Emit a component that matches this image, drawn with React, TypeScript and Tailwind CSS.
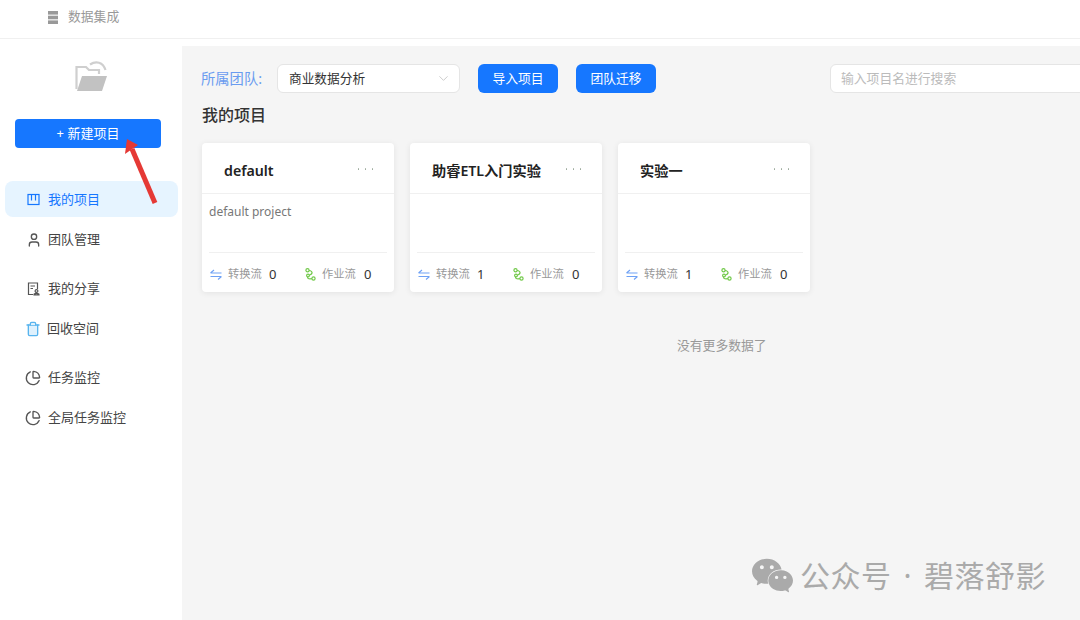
import { ChevronDown, PieChart, Trash2, User } from 'lucide-react';
import { SiWechat } from 'react-icons/si';

const FONT = 'font-["Noto_Sans","Noto_Sans_CJK_SC",sans-serif]';

function OpenFolderIcon() {
  return (
    <svg width="32" height="31" viewBox="0 0 32 31" fill="none">
      <path d="M1.5 29V7H11L14 10H24V14" stroke="#cfcfcf" strokeWidth="2.2" />
      <path d="M2 31L7 16H32L27 31Z" fill="#c2c2c2" />
      <path d="M15 4.5C21 0.5 28 2 30.5 10" stroke="#cfcfcf" strokeWidth="2.2" />
    </svg>
  );
}

function BoardIcon() {
  return (
    <svg width="13" height="13" viewBox="0 0 13 13" fill="none" stroke="#1677ff" strokeWidth="1.2">
      <rect x="1" y="1.5" width="11" height="10" />
      <path d="M4.5 1.5V7.5M8.5 1.5V7.5" />
    </svg>
  );
}

function ShareIcon() {
  return (
    <svg width="13" height="14" viewBox="0 0 13 14" fill="none" stroke="#555" strokeWidth="1.2">
      <path d="M6 12.5H1.5V1H10.5V7" />
      <path d="M3.5 4H8M3.5 6.5H6" />
      <circle cx="9.5" cy="9" r="1.4" />
      <path d="M7 12.8C7 11 12 11 12 12.8Z" />
    </svg>
  );
}

function SwapIcon() {
  return (
    <svg width="12" height="11" viewBox="0 0 12 11" fill="none" stroke="#6ea1f5" strokeWidth="1.1">
      <path d="M0.5 4H11.5M0.5 4L4 1" />
      <path d="M11.5 7.5H0.5M11.5 7.5L8 10.5" />
    </svg>
  );
}

function FlowIcon() {
  return (
    <svg width="11" height="13" viewBox="0 0 11 13" fill="none" stroke="#72c94a" strokeWidth="1.2">
      <circle cx="2.5" cy="2.2" r="1.6" />
      <circle cx="8.5" cy="10.5" r="1.6" />
      <circle cx="3" cy="7.5" r="1.4" />
      <path d="M4 2.5C8 3 8 6 4.4 7.2M2.5 9C2.5 11 4.5 11 6.9 10.7" />
    </svg>
  );
}

function NavItem({ icon, label, className = '', labelClass = '', active = false }: { icon: React.ReactNode; label: string; className?: string; labelClass?: string; active?: boolean }) {
  return (
    <div className={`flex h-9 items-center rounded-lg pt-[1px] pl-[22px] text-[13px] ${active ? 'bg-[#e6f4ff] text-[#1677ff]' : 'text-[#444]'} ${className}`}>
      <span className="flex w-[21px] shrink-0">{icon}</span>
      <span className={labelClass}>{label}</span>
    </div>
  );
}

function ProjectCard({ title, desc, transforms, jobs }: { title: string; desc?: string; transforms: number; jobs: number }) {
  return (
    <div className="flex h-[149px] w-[192px] flex-col rounded bg-white shadow-[0_1px_6px_rgba(0,0,0,0.08)]">
      <div className="flex h-[51px] shrink-0 items-center justify-between border-b border-[#f0f0f0] pt-[6px] pr-[21px] pl-[22px]">
        <span className="text-[14.2px] leading-none font-semibold text-[#222]">{title}</span>
        <span className="mb-[4px] flex gap-[5.5px]">
          <i className="size-[1.5px] rounded-full bg-[#9aa89a]" />
          <i className="size-[1.5px] rounded-full bg-[#9aa89a]" />
          <i className="size-[1.5px] rounded-full bg-[#9aa89a]" />
        </span>
      </div>
      <div className="mx-[7px] h-[59px] border-b border-[#f0f0f0] pt-[9px] text-[12px] leading-[17px] text-[#777]">{desc}</div>
      <div className="flex flex-1 items-center pt-[3px] pl-[8px] text-[11.3px] text-[#999]">
        <span className="flex w-[95px] items-center">
          <span className="mr-[6px] flex"><SwapIcon /></span>
          转换流
          <span className="ml-[7px] text-[13px] leading-none text-[#333]">{transforms}</span>
        </span>
        <span className="flex items-center">
          <span className="mr-[6px] flex"><FlowIcon /></span>
          作业流
          <span className="ml-[8px] text-[13px] leading-none text-[#333]">{jobs}</span>
        </span>
      </div>
    </div>
  );
}

export default function App() {
  return (
    <div className={`relative flex h-[620px] w-[1080px] flex-col overflow-hidden bg-white ${FONT}`}>
      <header className="flex h-[39px] shrink-0 items-center gap-[10px] border-b border-[#f0f0f0] pb-[4px] pl-[48px] text-[12.8px] text-[#999]">
        <svg width="10" height="13" viewBox="0 0 10 13" fill="#999">
          <rect y="0" width="10" height="3.6" />
          <rect y="4.7" width="10" height="3.6" />
          <rect y="9.4" width="10" height="3.6" />
        </svg>
        数据集成
      </header>

      <div className="flex min-h-0 flex-1">
        <aside className="flex w-[182px] shrink-0 flex-col">
          <div className="mt-[21px] flex justify-center">
            <OpenFolderIcon />
          </div>
          <button className="mt-[28px] ml-[15px] h-[29px] w-[146px] rounded bg-[#1677ff] text-[13px] text-white">+ 新建项目</button>
          <nav className="mt-[33px] flex flex-col pr-[4px] pl-[5px]">
            <NavItem active label="我的项目" icon={<BoardIcon />} />
            <NavItem className="mt-[4px]" label="团队管理" icon={<User size={16} color="#555" className="-ml-[1px]" />} />
            <NavItem className="mt-[13px]" label="我的分享" icon={<ShareIcon />} />
            <NavItem className="mt-[4px]" labelClass="-ml-[1px]" label="回收空间" icon={<Trash2 size={16} color="#58b4ee" fill="#dff1fd" className="-ml-[2px]" />} />
            <NavItem className="mt-[13px]" label="任务监控" icon={<PieChart size={16} color="#555" className="-ml-[2px]" />} />
            <NavItem className="mt-[4px]" label="全局任务监控" icon={<PieChart size={16} color="#555" className="-ml-[2px]" />} />
          </nav>
        </aside>

        <main className="mt-[7px] min-w-0 flex-1 bg-[#f5f5f5] pt-[18px] pl-[19px]">
          <div className="flex h-[29px] items-center">
            <span className="w-[76px] shrink-0 text-[14.3px] text-[#6a9cf0]">所属团队:</span>
            <div className="flex h-[29px] w-[183px] shrink-0 items-center justify-between rounded-md border border-[#e5e5e5] bg-white pr-[8px] pl-[11px] text-[12.7px] text-[#333]">
              商业数据分析
              <ChevronDown size={15} color="#bbb" strokeWidth={1.2} />
            </div>
            <button className="ml-[18px] h-[29px] w-[80px] shrink-0 rounded-md bg-[#1677ff] text-[12.8px] text-white">导入项目</button>
            <button className="ml-[18px] h-[29px] w-[80px] shrink-0 rounded-md bg-[#1677ff] text-[12.8px] text-white">团队迁移</button>
            <div className="ml-[174px] flex h-[29px] w-[270px] shrink-0 items-center rounded-md border border-[#e5e5e5] bg-white pl-[10px] text-[12.8px] text-[#bbb]">输入项目名进行搜索</div>
          </div>
          <h2 className="mt-[11px] pl-[1px] text-[16px] leading-[23px] font-medium text-[#333]">我的项目</h2>
          <div className="mt-[16px] flex gap-[16px] pl-[1px]">
            <ProjectCard title="default" desc="default project" transforms={0} jobs={0} />
            <ProjectCard title="助睿ETL入门实验" transforms={1} jobs={0} />
            <ProjectCard title="实验一" transforms={1} jobs={0} />
          </div>
          <p className="mt-[44px] pl-[476px] text-[12.8px] leading-[19px] text-[#999]">没有更多数据了</p>
        </main>
      </div>

      {/* annotation arrow drawn on top of the screenshot */}
      <svg className="absolute top-[136px] left-[120px]" width="42" height="72" viewBox="0 0 42 72">
        <path d="M35 67L12 13" stroke="#e53935" strokeWidth="5" />
        <path d="M7 3L5 18L18 9Z" fill="#e53935" />
      </svg>

      {/* wechat watermark */}
      <div className="absolute top-[555px] left-[752px] flex items-center text-[#aaa]">
        <SiWechat size={41} />
        <span className="ml-[7px] flex items-center text-[30px] leading-[38px] tracking-[0.5px] whitespace-nowrap">
          公众号
          <span className="mx-[12px]">·</span>
          碧落舒影
        </span>
      </div>
    </div>
  );
}
